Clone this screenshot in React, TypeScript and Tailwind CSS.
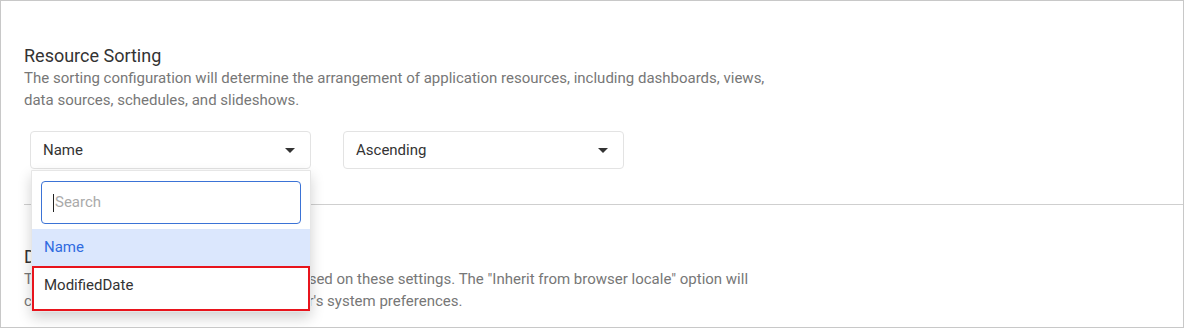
import React from 'react';

function Caret() {
	return (
		<svg width="10" height="5" viewBox="0 0 10 5" className="shrink-0">
			<path d="M0 0 L10 0 L5 5 Z" fill="#333" />
		</svg>
	);
}

function SelectBox({ value, open }: { value: string; open?: boolean }) {
	return (
		<div className="relative w-[281px]">
			<div className="h-[38px] flex items-center justify-between pl-3 pr-[15px] border border-[#e3e3e3] rounded-[4px] bg-white">
				<span className="text-[15px] text-[#333]">{value}</span>
				<Caret />
			</div>
			{open && (
				<div className="absolute left-px top-[39px] w-[280px] bg-white border border-[#e6e6e6] rounded-b-[3px] shadow-[0_6px_14px_rgba(0,0,0,0.18)] z-10">
					<div className="px-[9px] pt-[10px] pb-[5px]">
						<div className="h-[43px] border border-[#3b73d6] rounded-[4px] flex items-center pl-[11px]">
							<span className="w-px h-[18px] bg-[#222]" />
							<span className="text-[15px] text-[#aaa] ml-[1px]">Search</span>
						</div>
					</div>
					<div className="h-[37px] flex items-center pl-3 bg-[#dbe7fd] text-[15px] text-[#2f6be0]">
						Name
					</div>
					<div className="h-[45px] border-2 border-[#e8141c] pl-[10px] pt-[7px] text-[15px] leading-5 text-[#333]">
						ModifiedDate
					</div>
				</div>
			)}
		</div>
	);
}

export default function App() {
	return (
		<div
			className="w-[1184px] h-[328px] border border-[#c8c8c8] bg-white overflow-hidden"
			style={{ fontFamily: 'Roboto, "Liberation Sans", sans-serif' }}
		>
			<div className="pl-[23px] pt-[43px]">
				<h2 className="text-[18px] leading-[23px] text-[#333]">Resource Sorting</h2>
				<p className="text-[15px] leading-[22px] text-[#777] w-[750px]">
					The sorting configuration will determine the arrangement of application resources, including dashboards, views,
					data sources, schedules, and slideshows.
				</p>
				<div className="flex gap-8 ml-[6px] mt-5">
					<SelectBox value="Name" open />
					<SelectBox value="Ascending" />
				</div>
				<div className="border-t border-[#cfcfcf] mt-[35px]" />
				<h2 className="text-[18px] leading-[23px] text-[#333] mt-10">Date and Time Format</h2>
				<p className="text-[15px] leading-[22px] text-[#777] w-[750px]">
					The date and time formats are rendered based on these settings. The "Inherit from browser locale" option will
					consider the date and time formats for user's system preferences.
				</p>
			</div>
		</div>
	);
}
